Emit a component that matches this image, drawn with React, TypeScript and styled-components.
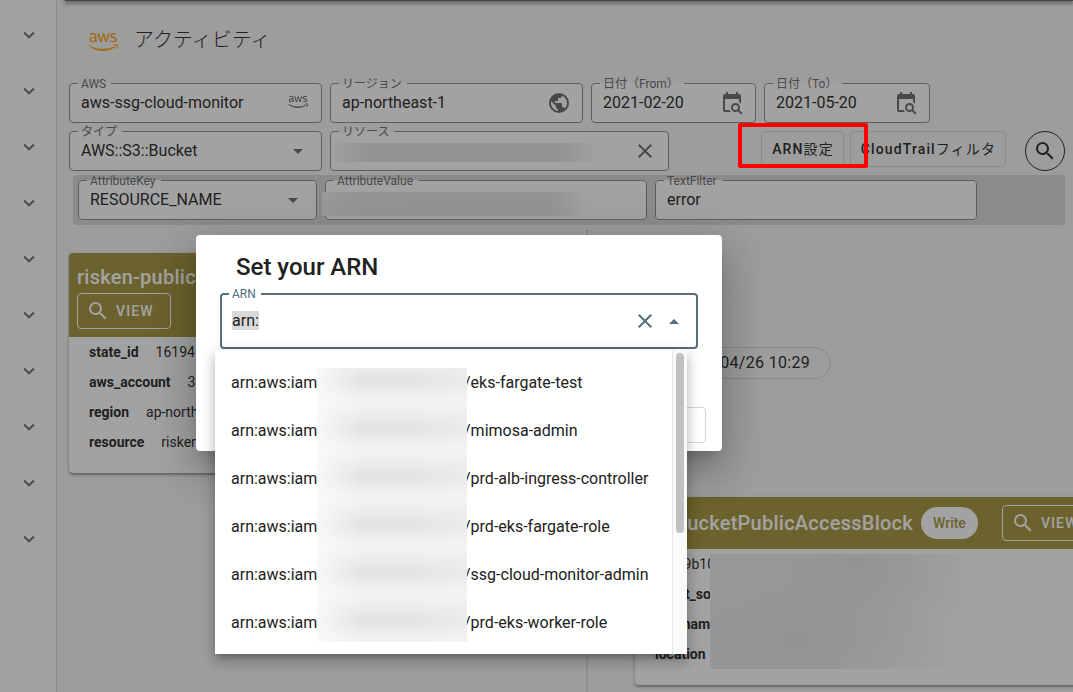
import React from "react";
import styled, { createGlobalStyle } from "styled-components";
import { FaAws } from "react-icons/fa";

const GlobalStyle = createGlobalStyle`
  *, *::before, *::after { box-sizing: border-box; }
  html, body { margin: 0; height: 100%; }
  #root { height: 100%; }
  body, button, input, select {
    font-family: Roboto, "Noto Sans CJK JP", sans-serif;
    font-size: 16px;
    color: #212121;
  }
`;

const colors = {
  line: "#8a8a8a",
  faint: "#d6d6d6",
  muted: "#666666",
  olive: "#a29236",
  primary: "#546e7a",
};

const paths = {
  chevron: "M7.41,8.58L12,13.17L16.59,8.58L18,10L12,16L6,10L7.41,8.58Z",
  close:
    "M19,6.41L17.59,5L12,10.59L6.41,5L5,6.41L10.59,12L5,17.59L6.41,19L12,13.41L17.59,19L19,17.59L13.41,12L19,6.41Z",
  magnify:
    "M9.5,3A6.5,6.5 0 0,1 16,9.5C16,11.11 15.41,12.59 14.44,13.73L14.71,14H15.5L20.5,19L19,20.5L14,15.5V14.71L13.73,14.44C12.59,15.41 11.11,16 9.5,16A6.5,6.5 0 0,1 3,9.5A6.5,6.5 0 0,1 9.5,3M9.5,5C7,5 5,7 5,9.5C5,12 7,14 9.5,14C12,14 14,12 14,9.5C14,7 12,5 9.5,5Z",
  menuDown: "M7,10L12,15L17,10H7Z",
  menuUp: "M7,15L12,10L17,15H7Z",
  earth:
    "M17.9,17.39C17.64,16.59 16.89,16 16,16H15V13A1,1 0 0,0 14,12H8V10H10A1,1 0 0,0 11,9V7H13A2,2 0 0,0 15,5V4.59C17.93,5.77 20,8.64 20,12C20,14.08 19.2,15.97 17.9,17.39M11,19.93C7.05,19.44 4,16.08 4,12C4,11.38 4.08,10.78 4.21,10.21L9,15V16A2,2 0 0,0 11,18M12,2A10,10 0 0,0 2,12A10,10 0 0,0 12,22A10,10 0 0,0 22,12A10,10 0 0,0 12,2Z",
  calendar:
    "M15.5,12C18,12 20,14 20,16.5C20,17.38 19.75,18.21 19.31,18.9L22.39,22L21,23.39L17.88,20.32C17.19,20.75 16.37,21 15.5,21C13,21 11,19 11,16.5C11,14 13,12 15.5,12M15.5,14A2.5,2.5 0 0,0 13,16.5A2.5,2.5 0 0,0 15.5,19A2.5,2.5 0 0,0 18,16.5A2.5,2.5 0 0,0 15.5,14M19,8H5V19H9.5C9.81,19.75 10.26,20.42 10.81,21H5C3.89,21 3,20.1 3,19V5C3,3.89 3.89,3 5,3H6V1H8V3H16V1H18V3H19A2,2 0 0,1 21,5V13.03C20.5,12.22 19.8,11.54 19,11V8Z",
};

function Icon({ name, size = 24 }: { name: keyof typeof paths; size?: number }) {
  return (
    <svg width={size} height={size} viewBox="0 0 24 24" fill="currentColor" aria-hidden="true">
      <path d={paths[name]} />
    </svg>
  );
}

const Page = styled.div`
  position: relative;
  display: flex;
  height: 100%;
  overflow: hidden;
  background: #f6f6f6;
`;

const Sidebar = styled.nav`
  display: flex;
  flex: none;
  flex-direction: column;
  width: 57px;
  padding-top: 7px;
  background: #fff;
  border-right: 1px solid #dadada;
`;

const ExpandButton = styled.button`
  display: flex;
  align-items: center;
  justify-content: center;
  height: 56px;
  padding: 0 0 0 2px;
  border: 0;
  background: none;
  color: ${colors.muted};
`;

const Main = styled.main`
  display: flex;
  flex: 1;
  flex-direction: column;
  min-width: 0;
  overflow: hidden;
`;

const AppBarEdge = styled.div`
  flex: none;
  height: 1px;
  margin-left: 8px;
  background: #606060;
  box-shadow: 0 1px 4px 1px rgba(0, 0, 0, 0.6);
`;

const Heading = styled.header`
  display: flex;
  flex: none;
  align-items: center;
  gap: 16px;
  height: 82px;
  padding: 0 31px 4px;
  color: #ff9d0a;

  svg {
    margin-top: 4px;
  }
`;

const PageTitle = styled.h1`
  margin: 0;
  color: #212121;
  font-size: 20px;
  font-weight: 300;
  line-height: 28px;
`;

const Filters = styled.form`
  display: flex;
  flex: none;
  flex-direction: column;
  gap: 8px;
  padding: 0 8px 0 12px;
`;

const FilterRow = styled.div<{ $columns: string }>`
  display: grid;
  grid-template-columns: ${(p) => p.$columns};
  gap: 8px;
`;

const AttributePanel = styled(FilterRow)`
  flex: none;
  margin: 4px 8px 0 16px;
  padding: 5px;
  border-radius: 4px;
  background: #d8d8d8;
`;

const FieldBox = styled.div<{ $active?: boolean }>`
  position: relative;
  display: flex;
  align-items: center;
  min-width: 0;
  height: ${(p) => (p.$active ? 56 : 40)}px;
  padding: 0 12px;
  border-radius: 4px;
  background: #fff;
  color: ${(p) => (p.$active ? colors.primary : colors.muted)};
`;

const Outline = styled.fieldset<{ $active?: boolean }>`
  position: absolute;
  inset: ${(p) => (p.$active ? -7 : -8)}px 0 0;
  margin: 0;
  padding: 0 ${(p) => (p.$active ? 7 : 8)}px;
  border: ${(p) => (p.$active ? `2px solid ${colors.primary}` : `1px solid ${colors.line}`)};
  border-radius: 4px;
  pointer-events: none;

  legend {
    height: 16px;
    padding: 0 4px;
    font-size: 12px;
    line-height: 16px;
    visibility: hidden;
  }
`;

const FieldLabel = styled.label`
  position: absolute;
  top: -7px;
  left: 12px;
  font-size: 12px;
  line-height: 16px;
  white-space: nowrap;
`;

const TextInput = styled.input`
  flex: 1;
  width: 0;
  min-width: 0;
  height: 32px;
  padding: 0 0 2px;
  border: 0;
  outline: 0;
  background: none;
`;

const SelectInput = styled.select`
  flex: 1;
  width: 0;
  min-width: 0;
  height: 32px;
  padding: 0 0 2px;
  border: 0;
  outline: 0;
  appearance: none;
  background: none;
`;

const FieldIcon = styled.span<{ $inset?: boolean }>`
  display: flex;
  flex: none;
  padding: ${(p) => (p.$inset ? "0 2px 2px 0" : "0")};
  pointer-events: none;
`;

const IconButton = styled.button`
  display: flex;
  flex: none;
  padding: 0;
  border: 0;
  background: none;
  color: inherit;
`;

const Smudge = styled.span<{ $over?: boolean }>`
  position: absolute;
  top: 12px;
  left: ${(p) => (p.$over ? -3 : 4)}px;
  width: 268px;
  height: ${(p) => (p.$over ? 24 : 19)}px;
  background: ${(p) =>
    p.$over
      ? "linear-gradient(90deg, #f0f0f0, #e7e7e7 14%, #e5e5e5 84%, #fff)"
      : "linear-gradient(90deg, #f8f8f8, #e7e7e7 12%, #e5e5e5 82%, #fff)"};
`;

const Actions = styled.div`
  display: flex;
  align-items: flex-start;
  justify-content: flex-end;
  gap: 6px;
`;

const OutlinedButton = styled.button<{ $light?: boolean }>`
  display: flex;
  flex: none;
  align-items: center;
  gap: ${(p) => (p.$light ? 6 : 0)}px;
  height: 36px;
  padding: 0 ${(p) => (p.$light ? 16 : 9)}px;
  padding-left: ${(p) => (p.$light ? 8 : 10)}px;
  border: 1px solid ${(p) => (p.$light ? "#fff" : colors.faint)};
  border-radius: 4px;
  background: none;
  color: ${(p) => (p.$light ? "#fff" : "#212121")};
  font-size: 14px;
  font-weight: 500;
  line-height: 20px;
  letter-spacing: 0.08em;
  white-space: nowrap;
`;

const Kana = styled.span`
  font-weight: 400;
`;

const RoundButton = styled.button`
  display: flex;
  flex: none;
  align-items: center;
  justify-content: center;
  width: 40px;
  height: 40px;
  margin-left: 13px;
  padding: 0;
  border: 1px solid #212121;
  border-radius: 50%;
  background: none;
`;

const Timeline = styled.section`
  position: relative;
  display: grid;
  flex: 1;
  grid-template-columns: 1fr 96px 1fr;
  grid-auto-rows: max-content;
  row-gap: 24px;
  align-items: center;
  margin: 4px -32px 0 12px;
  padding-top: 24px;

  &::before {
    content: "";
    position: absolute;
    top: 0;
    bottom: 0;
    left: calc(50% - 1px);
    width: 2px;
    background: #dcdcdc;
  }
`;

const Card = styled.article<{ $side: "left" | "right" }>`
  position: relative;
  grid-column: ${(p) => (p.$side === "left" ? 1 : 3)};
  min-width: 0;
  border-radius: 4px;
  overflow: hidden;
  background: #fff;
  box-shadow: 0 2px 2px rgba(0, 0, 0, 0.3), 0 1px 5px rgba(0, 0, 0, 0.15);
`;

const CardHeader = styled.header<{ $stacked?: boolean }>`
  display: flex;
  flex-direction: ${(p) => (p.$stacked ? "column" : "row")};
  align-items: ${(p) => (p.$stacked ? "flex-start" : "center")};
  padding: 8px;
  background: ${colors.olive};
`;

const CardTitle = styled.h2`
  margin: 0;
  color: #fff;
  font-size: 20px;
  font-weight: 500;
  line-height: 32px;
  letter-spacing: 0.0125em;
`;

const ModeChip = styled.span`
  margin: 0 24px 0 8px;
  padding: 0 12px;
  border-radius: 16px;
  background: #fff;
  color: ${colors.olive};
  font-size: 14px;
  font-weight: 500;
  line-height: 32px;
`;

const Properties = styled.dl`
  margin: 0;
  padding: 0 20px 16px;
  font-size: 14px;
  line-height: 30px;
`;

const Property = styled.div`
  display: flex;
  gap: 17px;
  white-space: nowrap;

  dt {
    font-weight: 700;
  }
  dd {
    margin: 0;
  }
`;

const CardSmudge = styled.div`
  position: absolute;
  top: 57px;
  left: 75px;
  width: 290px;
  height: 115px;
  background:
    radial-gradient(ellipse at 50% 10%, #e6e6e6, rgba(230, 230, 230, 0) 55%),
    radial-gradient(ellipse at 30% 75%, #e6e6e6, rgba(230, 230, 230, 0) 50%),
    linear-gradient(90deg, #eeeeee 20%, #fff);
`;

const TimeChip = styled.time`
  grid-column: 3;
  justify-self: start;
  padding: 0 20px 0 40px;
  border: 1px solid ${colors.faint};
  border-radius: 16px;
  line-height: 30px;
  letter-spacing: 0.02em;
`;

const Scrim = styled.div`
  position: absolute;
  inset: 0;
  background: rgba(33, 33, 33, 0.42);
`;

const Dialog = styled.section`
  position: absolute;
  top: 235px;
  left: 196px;
  display: flex;
  flex-direction: column;
  width: 526px;
  padding: 16px 16px 8px;
  border-radius: 4px;
  background: #fff;
  box-shadow: 0 11px 15px -7px rgba(0, 0, 0, 0.2), 0 24px 38px 3px rgba(0, 0, 0, 0.14),
    0 9px 46px 8px rgba(0, 0, 0, 0.12);
`;

const DialogTitle = styled.h2`
  margin: 0 24px 10px;
  font-size: 24px;
  font-weight: 500;
  line-height: 32px;
`;

const Combo = styled.div`
  position: relative;
  margin: 0 8px 58px;
`;

const ComboInput = styled(TextInput)`
  &::selection {
    background: #d9d9d9;
    color: #212121;
  }
`;

const ComboIcons = styled.div`
  display: flex;
  gap: 5px;
`;

const Menu = styled.div`
  position: absolute;
  top: 57px;
  left: -5px;
  z-index: 1;
  display: flex;
  width: 472px;
  background: #fff;
  box-shadow: 0 5px 5px -3px rgba(0, 0, 0, 0.2), 0 8px 10px 1px rgba(0, 0, 0, 0.14),
    0 3px 14px 2px rgba(0, 0, 0, 0.12);
`;

const Options = styled.ul`
  position: relative;
  flex: 1;
  margin: 0;
  padding: 9px 16px 7px;
  list-style: none;
`;

const Option = styled.li`
  display: grid;
  grid-template-columns: 86px 147px 1fr;
  color: #212121;
  line-height: 48px;
  white-space: nowrap;

  span:last-child {
    grid-column: 3;
  }
`;

const OptionSmudge = styled.div`
  position: absolute;
  top: 18px;
  left: 102px;
  width: 150px;
  height: 274px;
  background:
    linear-gradient(90deg, rgba(250, 250, 250, 0.9), rgba(245, 245, 245, 0) 30%, rgba(245, 245, 245, 0) 60%, rgba(245, 245, 245, 0.4)),
    repeating-linear-gradient(180deg, #eaeaea 0, #e3e3e3 14px, #f1f1f1 30px, #f2f2f2 38px, #eaeaea 48px);
`;

const ScrollTrack = styled.div`
  width: 15px;
  height: 304px;
  padding: 3px 3px 0;
  border-left: 1px solid #e8e8e8;
  background: #fafafa;
`;

const ScrollThumb = styled.div`
  width: 8px;
  height: 180px;
  border-radius: 4px;
  background: #c1c1c1;
`;

const DialogActions = styled.div`
  display: flex;
  justify-content: flex-end;
`;

const BlankButton = styled(OutlinedButton)`
  width: 72px;
`;

const Highlight = styled.div`
  position: absolute;
  top: 123px;
  left: 738px;
  width: 130px;
  height: 45px;
  border: 4px solid #ff0000;
  border-radius: 2px;
`;

interface FieldProps {
  id: string;
  label: string;
  value?: string;
  select?: boolean;
  smudge?: "inside" | "over";
  insetIcon?: boolean;
  icon?: React.ReactNode;
}

function Field({ id, label, value = "", select, smudge, insetIcon, icon }: FieldProps) {
  return (
    <FieldBox>
      <Outline aria-hidden="true">
        <legend>{label}</legend>
      </Outline>
      <FieldLabel htmlFor={id}>{label}</FieldLabel>
      {select ? (
        <SelectInput id={id} defaultValue={value}>
          <option>{value}</option>
        </SelectInput>
      ) : (
        <TextInput id={id} defaultValue={value} />
      )}
      {smudge && <Smudge $over={smudge === "over"} />}
      {icon && <FieldIcon $inset={insetIcon}>{icon}</FieldIcon>}
    </FieldBox>
  );
}

function ViewButton() {
  return (
    <OutlinedButton type="button" $light>
      <Icon name="magnify" />
      VIEW
    </OutlinedButton>
  );
}

function PropertyList({ items }: { items: [string, string][] }) {
  return (
    <Properties>
      {items.map(([name, value]) => (
        <Property key={name}>
          <dt>{name}</dt>
          <dd>{value}</dd>
        </Property>
      ))}
    </Properties>
  );
}

const roles = [
  "/eks-fargate-test",
  "/mimosa-admin",
  "/prd-alb-ingress-controller",
  "/prd-eks-fargate-role",
  "/ssg-cloud-monitor-admin",
  "/prd-eks-worker-role",
];

export default function App() {
  const arnInput = React.useRef<HTMLInputElement>(null);

  React.useEffect(() => {
    arnInput.current?.focus();
    arnInput.current?.select();
  }, []);

  return (
    <Page>
      <GlobalStyle />
      <Sidebar>
        {Array.from({ length: 10 }, (_, i) => (
          <ExpandButton key={i} type="button" aria-label="expand">
            <Icon name="chevron" size={22} />
          </ExpandButton>
        ))}
      </Sidebar>

      <Main>
        <AppBarEdge />
        <Heading>
          <FaAws size={30} />
          <PageTitle>アクティビティ</PageTitle>
        </Heading>

        <Filters>
          <FilterRow $columns="253fr 253fr 165fr 166fr 127fr">
            <Field id="aws" label="AWS" value="aws-ssg-cloud-monitor" insetIcon icon={<FaAws size={20} />} />
            <Field id="region" label="リージョン" value="ap-northeast-1" icon={<Icon name="earth" />} />
            <Field id="from" label="日付（From）" value="2021-02-20" icon={<Icon name="calendar" />} />
            <Field id="to" label="日付（To）" value="2021-05-20" icon={<Icon name="calendar" />} />
          </FilterRow>
          <FilterRow $columns="253fr 339fr 388fr">
            <Field id="type" label="タイプ" value="AWS::S3::Bucket" select icon={<Icon name="menuDown" />} />
            <Field id="resource" label="リソース" smudge="inside" icon={<Icon name="close" />} />
            <Actions>
              <OutlinedButton type="button">
                <span>
                  ARN<Kana>設定</Kana>
                </span>
              </OutlinedButton>
              <OutlinedButton type="button">
                <span>
                  CloudTrail<Kana>フィルタ</Kana>
                </span>
              </OutlinedButton>
              <RoundButton type="button" aria-label="search">
                <Icon name="magnify" />
              </RoundButton>
            </Actions>
          </FilterRow>
        </Filters>

        <AttributePanel $columns="239fr 322fr 322fr 75fr">
          <Field id="key" label="AttributeKey" value="RESOURCE_NAME" select icon={<Icon name="menuDown" />} />
          <Field id="value" label="AttributeValue" smudge="over" />
          <Field id="text" label="TextFilter" value="error" />
        </AttributePanel>

        <Timeline>
          <Card $side="left">
            <CardHeader $stacked>
              <CardTitle>risken-public</CardTitle>
              <ViewButton />
            </CardHeader>
            <PropertyList
              items={[
                ["state_id", "16194"],
                ["aws_account", "3"],
                ["region", "ap-northeast-1"],
                ["resource", "risken"],
              ]}
            />
          </Card>
          <TimeChip>2021/04/26 10:29</TimeChip>
          <Card $side="right">
            <CardHeader>
              <CardTitle>PutBucketPublicAccessBlock</CardTitle>
              <ModeChip>Write</ModeChip>
              <ViewButton />
            </CardHeader>
            <PropertyList
              items={[
                ["id", "9b10"],
                ["event_source", ""],
                ["username", ""],
                ["location", ""],
              ]}
            />
            <CardSmudge />
          </Card>
        </Timeline>
      </Main>

      <Scrim />

      <Dialog role="dialog" aria-labelledby="dialog-title">
        <DialogTitle id="dialog-title">Set your ARN</DialogTitle>
        <Combo>
          <FieldBox $active>
            <Outline $active aria-hidden="true">
              <legend>ARN</legend>
            </Outline>
            <FieldLabel htmlFor="arn">ARN</FieldLabel>
            <ComboInput id="arn" ref={arnInput} defaultValue="arn:" />
            <ComboIcons>
              <IconButton type="button" aria-label="clear">
                <Icon name="close" />
              </IconButton>
              <IconButton type="button" aria-label="close list">
                <Icon name="menuUp" />
              </IconButton>
            </ComboIcons>
          </FieldBox>
          <Menu>
            <Options>
              {roles.map((role) => (
                <Option key={role}>
                  <span>arn:aws:iam</span>
                  <span>{role}</span>
                </Option>
              ))}
              <OptionSmudge />
            </Options>
            <ScrollTrack>
              <ScrollThumb />
            </ScrollTrack>
          </Menu>
        </Combo>
        <DialogActions>
          <BlankButton type="button" aria-label="cancel" />
        </DialogActions>
      </Dialog>

      <Highlight />
    </Page>
  );
}
